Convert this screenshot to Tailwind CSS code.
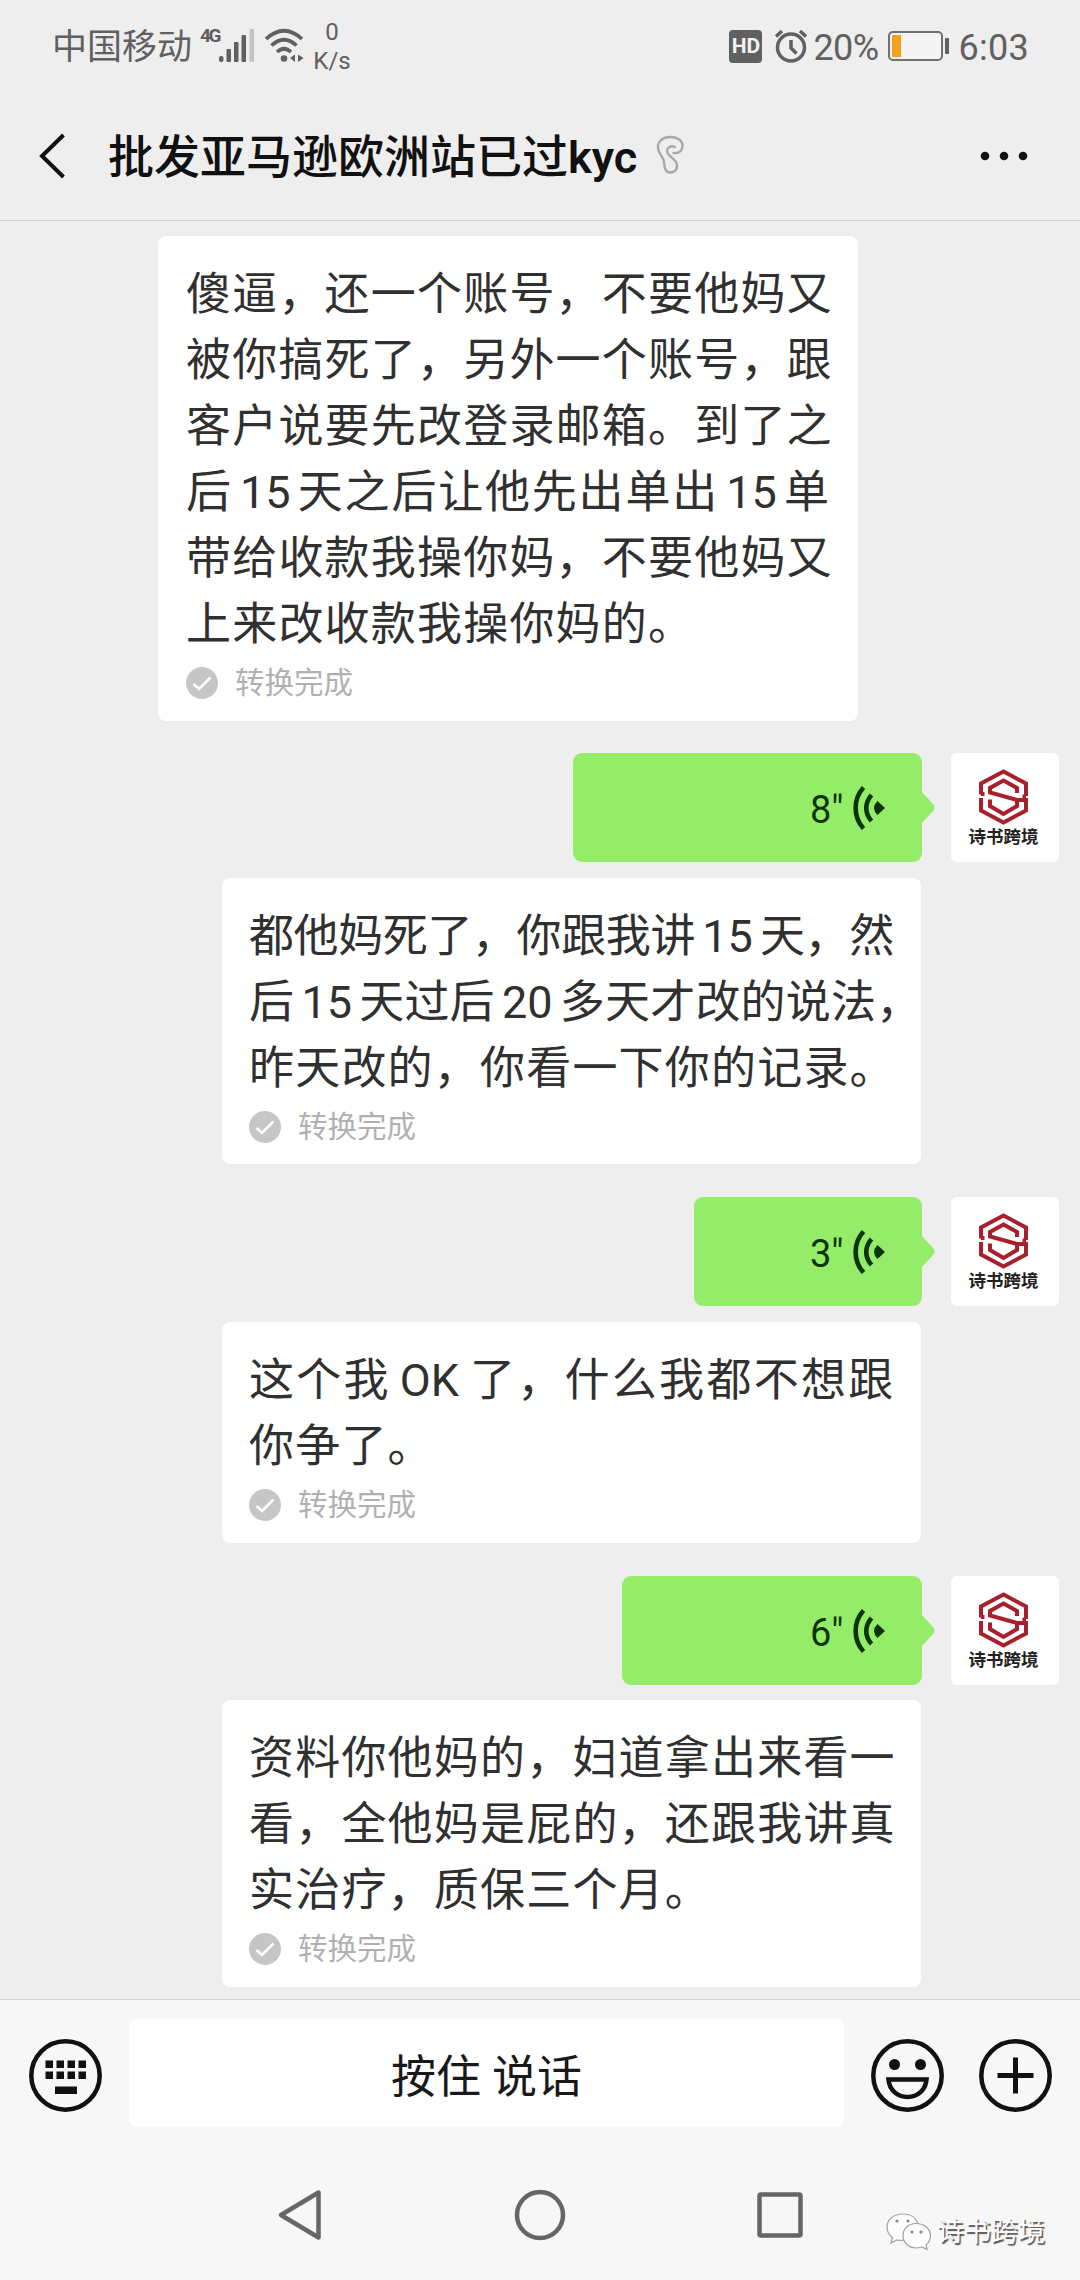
<!DOCTYPE html>
<html lang="zh-CN">
<head>
<meta charset="utf-8">
<title>批发亚马逊欧洲站已过kyc</title>
<script src="https://cdn.jsdelivr.net/npm/@tailwindcss/browser@4"></script>
</head>
<body class="w-[1080px] h-[2280px] overflow-hidden bg-[#eeeeee] font-['Roboto','Noto_Sans_CJK_SC',sans-serif] whitespace-nowrap">

<svg class="hidden">
  <symbol id="voice" viewBox="0 0 34 46">
    <path d="M11.500 2.500C1 14 1 32 11.500 43.500" fill="none" stroke="#0b3408" stroke-width="4.600"/>
    <path d="M19.500 10C12.500 18 12.500 28 19.500 36" fill="none" stroke="#0b3408" stroke-width="4.600"/>
    <path d="M25.500 16L33 23L25.500 30Q18.500 23 25.500 16Z" fill="#0b3408"/>
  </symbol>
  <symbol id="logo" viewBox="0 0 50 56">
    <g fill="none" stroke="#a8202c" stroke-width="4">
      <path d="M2.500 25.500V14.500L25 2.500L47.500 14.500V27"/>
      <path d="M6 25H2.500M44 27.500H47.500"/>
      <path d="M2.500 29V41.500L25 53.500L47.500 41.500V31H38.500L11.500 23.500V19L25 11.500L38.500 19V24"/>
      <path d="M11.500 30.500V37L25 45L38.500 37V32"/>
    </g>
  </symbol>
  <symbol id="done" viewBox="0 0 32 32">
    <circle cx="16" cy="16" r="16" fill="#c6c6c6"/>
    <path d="M7.500 17L13 22L24.500 10.500" fill="none" stroke="#fff" stroke-width="2.600"/>
  </symbol>
</svg>

<div class="flex h-full flex-col">
  <!-- system status bar -->
  <header class="flex h-[92px] shrink-0 items-center pl-[52px] pr-[51px] text-[#606060]">
    <span class="mt-[3px] text-[35px] leading-[92px]">中国移动</span>
    <div class="ml-[8px] flex h-[40px] w-[56px] items-start">
      <span class="mt-[-1px] w-[19px] text-[19px] font-bold leading-[22px] tracking-[-2.500px]">4G</span>
      <svg width="37" height="40" viewBox="19 0 37 40">
        <g fill="#606060"><rect x="19" y="30" width="4.500" height="6" rx="2"/><rect x="26.500" y="23" width="4.500" height="13" rx="1"/><rect x="34" y="16" width="4.500" height="20" rx="1"/><rect x="41.500" y="9" width="4.500" height="27" rx="1"/></g>
        <rect x="49.500" y="3" width="4.500" height="33" rx="1" fill="#c4c4c4"/>
      </svg>
    </div>
    <svg class="ml-[8px]" width="42" height="36" viewBox="0 0 42 36">
      <g fill="none" stroke="#606060" stroke-width="3.600"><path d="M2 11Q20 -5.500 38 11"/><path d="M7.500 17.500Q20 6 32.500 17.500"/><path d="M13 24Q20 17.500 27 24"/></g>
      <circle cx="20" cy="30.500" r="3.300" fill="#606060"/>
      <path d="M26 30L31 26.500V34zM39.500 30L34 26.500V34z" fill="#606060"/>
    </svg>
    <div class="ml-[6px] flex w-[40px] flex-col items-center pt-[1px] text-[24px] leading-[29px]"><span>0</span><span>K/s</span></div>
    <span class="flex-1"></span>
    <div class="flex h-[33px] w-[33px] items-center justify-center rounded-[4px] bg-[#606060] text-[21px] font-bold leading-[33px] text-[#f2f2f2]">HD</div>
    <svg class="ml-[12px]" width="34" height="34" viewBox="0 0 34 34" fill="none" stroke="#606060">
      <circle cx="17" cy="18.500" r="13.500" stroke-width="3.500"/><path d="M17 11V19L22.500 24.500" stroke-width="3.500"/><path d="M2 7.500L8 2M26 2L32 7.500" stroke-width="3.500"/>
    </svg>
    <span class="ml-[5px] mt-[3px] w-[68px] text-[36px] tracking-[-0.500px]">20%</span>
    <svg class="ml-[6px]" width="64" height="32" viewBox="0 0 64 32">
      <rect x="2" y="2" width="53" height="28" rx="4" fill="#f4f4f4" stroke="#707070" stroke-width="2"/>
      <rect x="5" y="5" width="9" height="22" fill="#f5a11c"/><rect x="58" y="8" width="4" height="16" rx="1" fill="#606060"/>
    </svg>
    <span class="ml-[7px] mt-[3px] text-[36px] tracking-[0.300px]">6:03</span>
  </header>

  <!-- conversation title -->
  <div class="flex h-[129px] shrink-0 items-center border-b border-[#d2d2d2] pl-[39px] pr-[52px] text-[#111]">
    <svg width="27" height="46" viewBox="0 0 27 46"><path d="M24.500 2L3 23L24.500 44" fill="none" stroke="#111" stroke-width="4"/></svg>
    <h1 class="ml-[42px] mt-[3px] text-[46px] font-medium leading-[60px]">批发亚马逊欧洲站已过<span class="text-[45px] font-semibold">kyc</span></h1>
    <svg class="ml-[19px] mt-[-3px]" width="29" height="40" viewBox="0 0 29 40" fill="none" stroke="#a9a9a9" stroke-width="2.400" stroke-linejoin="round" stroke-linecap="round">
      <path d="M17.500 18C21 18.500 26.500 17 26.500 11C26.500 5 21 2 14 2C6 2 1.500 7 2 13C2.500 19 7.500 22 8 27C8.500 32 9 37.500 14 37.500C20 37.500 22 33 20.500 28C19.500 24.500 11 20.500 11 16C11 12.500 15 10 19 12"/>
    </svg>
    <span class="flex-1"></span>
    <svg width="48" height="10" viewBox="0 0 48 10" fill="#111"><circle cx="5" cy="5" r="4.300"/><circle cx="24" cy="5" r="4.300"/><circle cx="43" cy="5" r="4.300"/></svg>
  </div>

  <!-- messages -->
  <main class="flex h-[1778px] shrink-0 flex-col pt-[15px] text-[45px] leading-[66px] text-[#303030]">
    <section class="ml-[158px] h-[485px] w-[700px] rounded-[8px] bg-white pl-[28px] pt-[26px]">
      <p class="tracking-[1.200px]">傻逼，还一个账号，不要他妈又</p>
      <p class="tracking-[1.200px]">被你搞死了，另外一个账号，跟</p>
      <p class="tracking-[1.200px]">客户说要先改登录邮箱。到了之</p>
      <p class="tracking-[1.800px]">后<span class="inline-block w-[65px] text-center tracking-normal">15</span>天之后让他先出单出<span class="inline-block w-[65px] text-center tracking-normal">15</span>单</p>
      <p class="tracking-[1.200px]">带给收款我操你妈，不要他妈又</p>
      <p class="tracking-[1.200px]">上来改收款我操你妈的。</p>
      <div class="flex h-[50px] items-center gap-[17px] text-[29.500px] text-[#b0b0b0]"><svg width="32" height="32"><use href="#done"/></svg>转换完成</div>
    </section>

    <div class="mt-[32px] flex h-[109px] pl-[573px]">
      <div class="relative flex w-[349px] items-center rounded-[9px] bg-[#95ec69] pl-[237px] text-[38px] text-[#0b3408]"><span class="mt-[4px] w-[42px]">8"</span><svg width="34" height="46"><use href="#voice"/></svg><svg class="absolute left-full top-[39px]" width="14" height="32"><path d="M0 0L11 12Q14 15.500 11 19L0 31z" fill="#95ec69"/></svg></div>
      <div class="ml-[29px] flex w-[108px] flex-col items-center rounded-[6px] bg-white pt-[16px] pr-[3px] text-[17.500px] font-bold leading-[24px] text-[#222]"><svg width="51" height="56"><use href="#logo"/></svg>诗书跨境</div>
    </div>
    <section class="ml-[222px] mt-[16px] h-[286px] w-[699px] rounded-[8px] bg-white pl-[27px] pt-[26px]">
      <p class="tracking-[-0.400px]">都他妈死了，你跟我讲<span class="inline-block w-[65px] text-center tracking-normal">15</span>天，然</p>
      <p class="tracking-[0.200px]">后<span class="inline-block w-[65px] text-center tracking-normal">15</span>天过后<span class="inline-block w-[65px] text-center tracking-normal">20</span>多天才改的说法，</p>
      <p class="tracking-[1.200px]">昨天改的，你看一下你的记录。</p>
      <div class="flex h-[50px] items-center gap-[17px] text-[29.500px] text-[#b0b0b0]"><svg width="32" height="32"><use href="#done"/></svg>转换完成</div>
    </section>

    <div class="mt-[33px] flex h-[109px] pl-[694px]">
      <div class="relative flex w-[228px] items-center rounded-[9px] bg-[#95ec69] pl-[116px] text-[38px] text-[#0b3408]"><span class="mt-[4px] w-[42px]">3"</span><svg width="34" height="46"><use href="#voice"/></svg><svg class="absolute left-full top-[39px]" width="14" height="32"><path d="M0 0L11 12Q14 15.500 11 19L0 31z" fill="#95ec69"/></svg></div>
      <div class="ml-[29px] flex w-[108px] flex-col items-center rounded-[6px] bg-white pt-[16px] pr-[3px] text-[17.500px] font-bold leading-[24px] text-[#222]"><svg width="51" height="56"><use href="#logo"/></svg>诗书跨境</div>
    </div>
    <section class="ml-[222px] mt-[16px] h-[221px] w-[699px] rounded-[8px] bg-white pl-[27px] pt-[26px]">
      <p class="tracking-[2.300px]">这个我<span class="inline-block w-[79px] pr-[2px] text-center tracking-normal">OK</span>了，什么我都不想跟</p>
      <p class="tracking-[1.200px]">你争了。</p>
      <div class="flex h-[50px] items-center gap-[17px] text-[29.500px] text-[#b0b0b0]"><svg width="32" height="32"><use href="#done"/></svg>转换完成</div>
    </section>

    <div class="mt-[33px] flex h-[109px] pl-[622px]">
      <div class="relative flex w-[300px] items-center rounded-[9px] bg-[#95ec69] pl-[188px] text-[38px] text-[#0b3408]"><span class="mt-[4px] w-[42px]">6"</span><svg width="34" height="46"><use href="#voice"/></svg><svg class="absolute left-full top-[39px]" width="14" height="32"><path d="M0 0L11 12Q14 15.500 11 19L0 31z" fill="#95ec69"/></svg></div>
      <div class="ml-[29px] flex w-[108px] flex-col items-center rounded-[6px] bg-white pt-[16px] pr-[3px] text-[17.500px] font-bold leading-[24px] text-[#222]"><svg width="51" height="56"><use href="#logo"/></svg>诗书跨境</div>
    </div>
    <section class="ml-[222px] mt-[15px] h-[287px] w-[699px] rounded-[8px] bg-white pl-[27px] pt-[26px]">
      <p class="tracking-[1.200px]">资料你他妈的，妇道拿出来看一</p>
      <p class="tracking-[1.200px]">看，全他妈是屁的，还跟我讲真</p>
      <p class="tracking-[1.200px]">实治疗，质保三个月。</p>
      <div class="flex h-[50px] items-center gap-[17px] text-[29.500px] text-[#b0b0b0]"><svg width="32" height="32"><use href="#done"/></svg>转换完成</div>
    </section>
  </main>

  <!-- input bar and navigation -->
  <footer class="flex flex-1 flex-col border-t border-[#cecece] bg-[#f7f7f7]">
    <div class="flex h-[150px] items-center pl-[29px] pr-[28px]">
      <svg width="73" height="73" viewBox="0 0 73 73" fill="#111">
        <circle cx="36.500" cy="36.500" r="34.200" fill="none" stroke="#111" stroke-width="4.500"/>
        <path d="M16.500 21.500h7.500v7.500h-7.500zM27.500 21.500h7.500v7.500h-7.500zM38.500 21.500h7.500v7.500h-7.500zM49.500 21.500h7.500v7.500h-7.500zM16.500 32.500h7.500v7.500h-7.500zM27.500 32.500h7.500v7.500h-7.500zM38.500 32.500h7.500v7.500h-7.500zM49.500 32.500h7.500v7.500h-7.500zM26 47.500h22v7.500h-22z"/>
      </svg>
      <div class="ml-[27px] mt-[-5px] flex h-[108px] w-[715px] items-center justify-center rounded-[8px] bg-white pt-[11px] text-[45px] text-[#191919]">按住 说话</div>
      <svg class="ml-[27px]" width="73" height="73" viewBox="0 0 73 73" fill="none" stroke="#111" stroke-width="4.500">
        <circle cx="36.500" cy="36.500" r="34.200"/><g fill="#111" stroke="none"><circle cx="23.500" cy="25.500" r="5.500"/><circle cx="49.500" cy="25.500" r="5.500"/></g>
        <path d="M17.500 40.500H55.500C54.500 51 47 58 36.500 58C26 58 18.500 51 17.500 40.500Z"/>
      </svg>
      <span class="flex-1"></span>
      <svg width="73" height="73" viewBox="0 0 73 73" fill="none" stroke="#111" stroke-width="4.500"><circle cx="36.500" cy="36.500" r="34.200"/><path d="M18.500 36.500H54.500M36.500 18.500V54.500" stroke-width="5"/></svg>
    </div>
    <div class="flex h-[129px] items-center pl-[276px] pr-[35px]">
      <svg width="48" height="54" viewBox="0 0 48 54"><path d="M42.500 4.500V49.500L5 27Z" fill="none" stroke="#666" stroke-width="4.500" stroke-linejoin="round"/></svg>
      <svg class="ml-[190px]" width="52" height="52"><circle cx="26" cy="26" r="23" fill="none" stroke="#666" stroke-width="4.500"/></svg>
      <svg class="ml-[189px]" width="50" height="50"><rect x="4.500" y="4.500" width="41" height="41" rx="1.500" fill="none" stroke="#666" stroke-width="4.500"/></svg>
      <span class="flex-1"></span>
      <div class="mt-[34px] flex items-center gap-[4px]">
        <svg width="48" height="40" viewBox="0 0 48 40" fill="#fdfdfd" stroke="#a0a0a0" stroke-width="1.200">
          <path d="M18 2C8 2 2 8 2 15C2 20 4 23 7.500 25.500L6 31L12 28C20 29.500 34 26 33 14C32 6 26 2 18 2Z"/>
          <path d="M31 11.500C23 11.500 18 17 18 23.500C18 31 24 36 31 36C33 36 35 35.500 37 35L42 37.500L41 33C44 30.500 45.500 27 45.500 23.500C45.500 17 39 11.500 31 11.500Z"/>
          <g fill="#888" stroke="none"><circle cx="12" cy="9" r="1.600"/><circle cx="23" cy="9" r="1.600"/><circle cx="27" cy="20" r="1.600"/><circle cx="36" cy="20" r="1.600"/></g>
        </svg>
        <span class="text-[27px] leading-[36px] text-[#fbfbfb] [text-shadow:1.500px_1.500px_1px_#555]">诗书跨境</span>
      </div>
    </div>
  </footer>
</div>
</body>
</html>
